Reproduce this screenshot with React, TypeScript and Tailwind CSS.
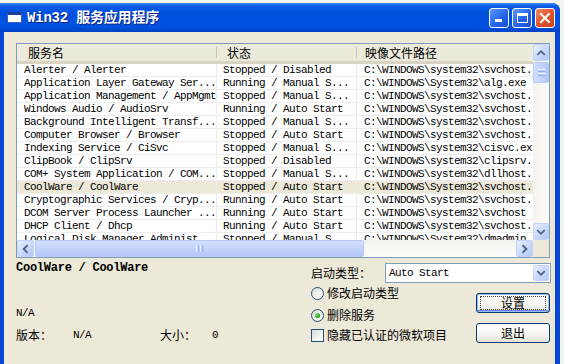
import React from "react";

type Row = [string, string, string];

const rows: Row[] = [
  ["Alerter / Alerter", "Stopped / Disabled", "C:\\WINDOWS\\system32\\svchost."],
  ["Application Layer Gateway Ser...", "Running / Manual S...", "C:\\WINDOWS\\System32\\alg.exe"],
  ["Application Management / AppMgmt", "Stopped / Manual S...", "C:\\WINDOWS\\system32\\svchost."],
  ["Windows Audio / AudioSrv", "Running / Auto Start", "C:\\WINDOWS\\System32\\svchost."],
  ["Background Intelligent Transf...", "Stopped / Manual S...", "C:\\WINDOWS\\system32\\svchost."],
  ["Computer Browser / Browser", "Stopped / Auto Start", "C:\\WINDOWS\\system32\\svchost."],
  ["Indexing Service / CiSvc", "Stopped / Manual S...", "C:\\WINDOWS\\system32\\cisvc.ex"],
  ["ClipBook / ClipSrv", "Stopped / Disabled", "C:\\WINDOWS\\system32\\clipsrv."],
  ["COM+ System Application / COM...", "Stopped / Manual S...", "C:\\WINDOWS\\system32\\dllhost."],
  ["CoolWare / CoolWare", "Stopped / Auto Start", "C:\\WINDOWS\\System32\\svchost."],
  ["Cryptographic Services / Cryp...", "Running / Auto Start", "C:\\WINDOWS\\system32\\svchost."],
  ["DCOM Server Process Launcher ...", "Running / Auto Start", "C:\\WINDOWS\\system32\\svchost"],
  ["DHCP Client / Dhcp", "Running / Auto Start", "C:\\WINDOWS\\system32\\svchost."],
  ["Logical Disk Manager Administ...", "Stopped / Manual S...", "C:\\WINDOWS\\System32\\dmadmin."],
];

function Chevron({ dir }: { dir: "up" | "down" | "left" | "right" }) {
  const d =
    dir === "up"
      ? "M4.5 9.5 L8 6 L11.5 9.5"
      : dir === "down"
      ? "M4.5 6.5 L8 10 L11.5 6.5"
      : dir === "left"
      ? "M9.5 4.5 L6 8 L9.5 11.5"
      : "M6.5 4.5 L10 8 L6.5 11.5";
  return (
    <svg width="16" height="16" viewBox="0 0 16 16" className="block">
      <path d={d} fill="none" stroke="#4D6185" strokeWidth="2" strokeLinecap="square" />
    </svg>
  );
}

function ScrollBtn({ dir, cls }: { dir: "up" | "down" | "left" | "right"; cls: string }) {
  return (
    <div
      className={`${cls} shrink-0 flex items-center justify-center rounded-[2px] border border-[#C3D3FD] bg-[linear-gradient(135deg,#E6EEFE_0%,#C6D6FB_60%,#B4C8F6_100%)]`}
    >
      <Chevron dir={dir} />
    </div>
  );
}

function TitleBar() {
  return (
    <div className="h-[29px] shrink-0 flex items-center rounded-tr-[8px] bg-[linear-gradient(180deg,#3E8DF8_0%,#0A5CE8_10%,#0050DE_35%,#0052E2_80%,#0043C4_100%)]">
      <div className="ml-[7px] w-[15px] h-[11px] bg-white border border-[#3A5FB0] border-t-[3px] border-t-[#1B3E9C]" />
      <div className="ml-[5px] text-white font-bold text-[14px] leading-[16px] tracking-[-0.2px] font-['Liberation_Mono','Noto_Sans_CJK_SC',monospace] [text-shadow:1px_1px_0_#0A1F80]">
        Win32 服务应用程序
      </div>
      <div className="ml-auto mr-[5px] flex gap-[3px]">
        <div className="w-[20px] h-[20px] rounded-[3px] border border-white bg-[linear-gradient(135deg,#5A9CFF_0%,#2563EA_55%,#1B4FD0_100%)] flex items-end pl-[5px] pb-[5px]">
          <div className="w-[7px] h-[3px] bg-white" />
        </div>
        <div className="w-[20px] h-[20px] rounded-[3px] border border-white bg-[linear-gradient(135deg,#5A9CFF_0%,#2563EA_55%,#1B4FD0_100%)] flex items-center justify-center">
          <div className="w-[11px] h-[10px] border border-white border-t-[3px]" />
        </div>
        <div className="w-[20px] h-[20px] rounded-[3px] border border-white bg-[linear-gradient(135deg,#F08A68_0%,#E0562E_50%,#C8401C_100%)] flex items-center justify-center">
          <svg width="12" height="12" viewBox="0 0 12 12">
            <path d="M2 2 L10 10 M10 2 L2 10" stroke="white" strokeWidth="2" strokeLinecap="square" />
          </svg>
        </div>
      </div>
    </div>
  );
}

function ListView() {
  return (
    <div className="w-[534px] h-[215px] border border-[#7F9DB9] bg-white flex flex-col">
      <div className="flex h-[196px]">
        <div className="w-[516px] h-[196px] overflow-hidden flex flex-col">
          <div className="h-[20px] shrink-0 flex bg-[#EBEADB] border-b-[3px] border-[#D8D4C4] text-[12px] leading-[17px] text-black">
            <div className="w-[200px] shrink-0 pl-[11px] flex items-center relative">
              服务名
              <div className="absolute right-0 top-[3px] h-[11px] w-[1px] bg-[#C7C5B2]" />
            </div>
            <div className="w-[140px] shrink-0 pl-[10px] flex items-center relative">
              状态
              <div className="absolute right-0 top-[3px] h-[11px] w-[1px] bg-[#C7C5B2]" />
            </div>
            <div className="flex-1 pl-[8px] flex items-center">映像文件路径</div>
          </div>
          <div className="flex flex-col font-['Liberation_Mono',monospace] text-[11px] tracking-[-0.6px] text-black">
            {rows.map((r, i) => (
              <div
                key={i}
                className={`h-[13px] shrink-0 flex leading-[12px] border-b border-[#EDEDED] ${
                  i === 9 ? "bg-[#ECE9D8]" : ""
                }`}
              >
                <div className="w-[200px] shrink-0 pl-[7px] overflow-hidden whitespace-nowrap border-r border-[#EDEDED]">
                  {r[0]}
                </div>
                <div className="w-[140px] shrink-0 pl-[6px] overflow-hidden whitespace-nowrap border-r border-[#EDEDED]">
                  {r[1]}
                </div>
                <div className="flex-1 pl-[7px] overflow-hidden whitespace-nowrap">{r[2]}</div>
              </div>
            ))}
          </div>
        </div>
        <div className="w-[16px] h-[196px] flex flex-col bg-[linear-gradient(90deg,#F3F1EA_0%,#FDFDFB_100%)]">
          <ScrollBtn dir="up" cls="w-[16px] h-[17px]" />
          <div className="w-[16px] h-[21px] mt-[1px] rounded-[2px] border border-[#B7C9F4] bg-[linear-gradient(90deg,#D2DEFD_0%,#C0D2FB_60%,#B3C7F6_100%)] flex flex-col items-center justify-center gap-[1px]">
            <div className="w-[7px] h-[1px] bg-[#EEF4FE]" />
            <div className="w-[7px] h-[1px] bg-[#8CB0F8]" />
            <div className="w-[7px] h-[1px] bg-[#EEF4FE]" />
            <div className="w-[7px] h-[1px] bg-[#8CB0F8]" />
          </div>
          <div className="flex-1" />
          <ScrollBtn dir="down" cls="w-[16px] h-[17px]" />
        </div>
      </div>
      <div className="flex h-[17px]">
        <div className="w-[516px] h-[17px] flex bg-[linear-gradient(180deg,#F3F1EA_0%,#FDFDFB_100%)]">
          <ScrollBtn dir="left" cls="w-[17px] h-[17px]" />
          <div className="w-[329px] h-[17px] ml-[1px] rounded-[2px] border border-[#B7C9F4] bg-[linear-gradient(180deg,#D2DEFD_0%,#C0D2FB_60%,#B3C7F6_100%)] flex items-center justify-center gap-[1px]">
            <div className="w-[1px] h-[7px] bg-[#EEF4FE]" />
            <div className="w-[1px] h-[7px] bg-[#8CB0F8]" />
            <div className="w-[1px] h-[7px] bg-[#EEF4FE]" />
            <div className="w-[1px] h-[7px] bg-[#8CB0F8]" />
          </div>
          <div className="flex-1" />
          <ScrollBtn dir="right" cls="w-[17px] h-[17px]" />
        </div>
        <div className="w-[16px] h-[17px] bg-[#ECE9D8]" />
      </div>
    </div>
  );
}

function Radio({ checked }: { checked?: boolean }) {
  return (
    <div className="w-[13px] h-[13px] shrink-0 rounded-full border border-[#1C5180] bg-[linear-gradient(135deg,#DCDCD5_0%,#F4F4F0_60%,#FFFFFF_100%)] flex items-center justify-center">
      {checked && (
        <div className="w-[5px] h-[5px] rounded-full bg-[radial-gradient(circle_at_35%_35%,#7BE07B_0%,#21A121_60%,#137A13_100%)]" />
      )}
    </div>
  );
}

function XPButton({ label, def }: { label: string; def?: boolean }) {
  return (
    <div
      className={`w-[74px] h-[20px] rounded-[3px] border border-[#003C74] bg-[linear-gradient(180deg,#FFFFFF_0%,#F5F4EF_60%,#E3E1D6_100%)] flex items-center justify-center text-[12px] leading-[14px] text-black ${
        def ? "shadow-[inset_0_0_0_1px_#9DB9EB,inset_0_-1px_0_1px_#6982EE]" : ""
      }`}
    >
      {def ? (
        <div className="w-[66px] h-[14px] border border-dotted border-[#444] flex items-center justify-center">
          {label}
        </div>
      ) : (
        label
      )}
    </div>
  );
}

export default function App() {
  return (
    <div className="w-[564px] h-[364px] bg-[#F4F4F2] overflow-hidden font-['Noto_Sans_CJK_SC',sans-serif]">
      <div className="mt-[3px] w-[560px] h-[361px] bg-[#0846D8] rounded-tr-[8px] flex flex-col">
        <TitleBar />
        <div className="ml-[4px] mr-[5px] flex-1 bg-[#ECE9D8] flex flex-col">
          <div className="pl-[12px] pt-[11px]">
            <ListView />
          </div>
          <div className="flex">
            <div className="w-[307px] shrink-0 pl-[12px] flex flex-col text-black">
              <div className="mt-[3px] h-[14px] leading-[14px] text-[12px] font-bold tracking-[-0.25px] font-['Liberation_Mono',monospace]">
                CoolWare / CoolWare
              </div>
              <div className="mt-[31px] h-[14px] leading-[14px] text-[11px] tracking-[-0.6px] font-['Liberation_Mono',monospace]">
                N/A
              </div>
              <div className="mt-[8px] h-[14px] flex items-center text-[12px] leading-[14px]">
                <div className="w-[57px]">版本：</div>
                <div className="w-[87px] text-[11px] tracking-[-0.6px] font-['Liberation_Mono',monospace]">N/A</div>
                <div className="w-[52px]">大小：</div>
                <div className="text-[11px] font-['Liberation_Mono',monospace]">0</div>
              </div>
            </div>
            <div className="flex flex-col pt-[5px] text-[12px] text-black">
              <div className="flex items-center h-[20px]">
                <div className="w-[74px] leading-[14px]">启动类型：</div>
                <div className="w-[166px] h-[20px] border border-[#7F9DB9] bg-white flex items-center">
                  <div className="flex-1 pl-[3px] text-[11px] leading-[14px] tracking-[-0.6px] font-['Liberation_Mono',monospace]">
                    Auto Start
                  </div>
                  <ScrollBtn dir="down" cls="w-[16px] h-[16px] mr-[1px]" />
                </div>
              </div>
              <div className="flex">
                <div className="w-[165px] flex flex-col">
                  <div className="mt-[2px] h-[16px] flex items-center">
                    <Radio />
                    <div className="ml-[3px] leading-[14px]">修改启动类型</div>
                  </div>
                  <div className="mt-[6px] h-[16px] flex items-center">
                    <Radio checked />
                    <div className="ml-[3px] leading-[14px]">删除服务</div>
                  </div>
                  <div className="mt-[4px] h-[16px] flex items-center">
                    <div className="w-[13px] h-[13px] shrink-0 border border-[#1C5180] bg-[linear-gradient(135deg,#DCDCD5_0%,#F4F4F0_60%,#FFFFFF_100%)]" />
                    <div className="ml-[3px] leading-[14px]">隐藏已认证的微软项目</div>
                  </div>
                </div>
                <div className="flex flex-col">
                  <div className="mt-[10px]">
                    <XPButton label="设置" def />
                  </div>
                  <div className="mt-[10px]">
                    <XPButton label="退出" />
                  </div>
                </div>
              </div>
            </div>
          </div>
        </div>
      </div>
    </div>
  );
}
